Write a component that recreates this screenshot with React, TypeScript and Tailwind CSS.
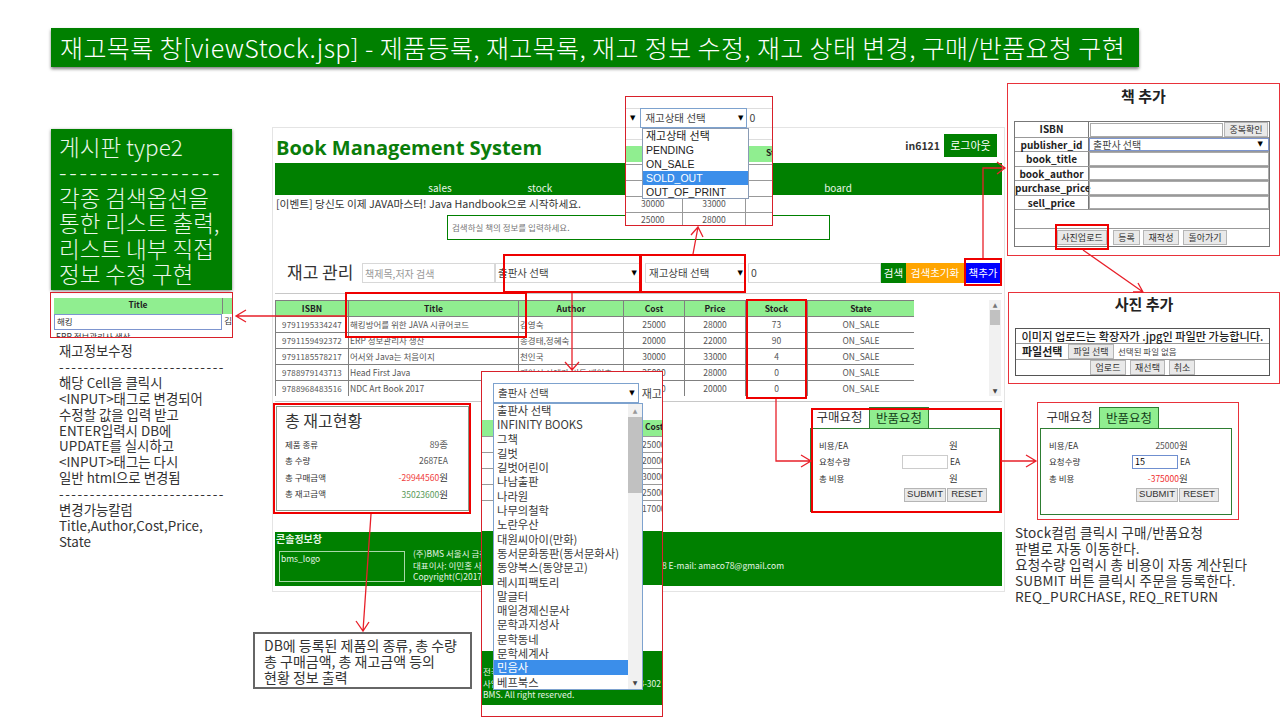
import React from "react";

const rows = [
  ["9791195334247", "해킹방어를 위한 JAVA 시큐어코드", "김영숙", "25000", "28000", "73", "ON_SALE"],
  ["9791159492372", "ERP 정보관리사 생산", "송경태,정혜숙", "20000", "22000", "90", "ON_SALE"],
  ["9791185578217", "어서와 Java는 처음이지", "천인국", "30000", "33000", "4", "ON_SALE"],
  ["9788979143713", "Head First Java", "케이시 시에라,버트 베이츠", "25000", "28000", "0", "ON_SALE"],
  ["9788968483516", "NDC Art Book 2017", "넥슨", "17000", "20000", "0", "ON_SALE"],
];

const publishers = [
  "출판사 선택", "INFINITY BOOKS", "그책", "길벗", "길벗어린이", "나남출판", "나라원", "나무의철학", "노란우산",
  "대원씨아이(만화)", "동서문화동판(동서문화사)", "동양북스(동양문고)", "레시피팩토리", "말글터", "매일경제신문사",
  "문학과지성사", "문학동네", "문학세계사", "민음사", "베프북스",
];

function Caret() {
  return <span className="text-[7px] leading-none text-black font-['DejaVu_Sans',sans-serif]">▼</span>;
}

function Btn({ children, className = "" }: { children: React.ReactNode; className?: string }) {
  return (
    <span className={`flex items-center justify-center bg-[#e9e9e9] border border-[#b5b5b5] text-[#333] ${className}`}>
      {children}
    </span>
  );
}

function StockTable() {
  return (
    <div className="h-[96px] w-[639px] overflow-hidden">
      <table className="table-fixed border-collapse w-[639px] text-[8.5px] text-[#555]">
        <colgroup>
          <col className="w-[73px]" />
          <col className="w-[170px]" />
          <col className="w-[105px]" />
          <col className="w-[61px]" />
          <col className="w-[61px]" />
          <col className="w-[62px]" />
          <col className="w-[107px]" />
        </colgroup>
        <thead>
          <tr className="h-4 bg-[#90ee90] text-[#222]">
            {["ISBN", "Title", "Author", "Cost", "Price", "Stock", "State"].map((h) => (
              <th key={h} className="border border-[#808080] font-bold p-0">{h}</th>
            ))}
          </tr>
        </thead>
        <tbody>
          {rows.map((r) => (
            <tr key={r[0]} className="h-4">
              <td className="border border-[#808080] p-0 text-center text-[8px] tracking-[0.02em]">{r[0]}</td>
              <td className="border border-[#808080] p-0 pl-[1px] whitespace-nowrap overflow-hidden">{r[1]}</td>
              <td className="border border-[#808080] p-0 pl-[1px] whitespace-nowrap overflow-hidden">{r[2]}</td>
              <td className="border border-[#808080] p-0 text-center">{r[3]}</td>
              <td className="border border-[#808080] p-0 text-center">{r[4]}</td>
              <td className="border border-[#808080] p-0 text-center">{r[5]}</td>
              <td className="border border-[#808080] p-0 text-center">{r[6]}</td>
            </tr>
          ))}
        </tbody>
      </table>
    </div>
  );
}

function RequestPanel({ price, qty, total }: { price?: string; qty?: string; total?: string }) {
  return (
    <div className="w-full h-full flex flex-col text-[#333]">
      <div className="flex h-[21px] text-[12.5px] leading-[20px]">
        <span className="w-[59px] text-center">구매요청</span>
        <span className="w-[60px] text-center bg-[#90ee90] border border-[#2e7d32] border-b-0 text-[#14401a]">반품요청</span>
      </div>
      <div className="flex-1 border border-[#2e7d32] px-2 pt-[8px] text-[8.5px]">
        <div className="flex items-center h-[16.5px]">
          <span className="w-[82px]">비용/EA</span>
          <span className="w-[48px] text-right text-[#555]">{price}</span>
          <span className="text-[9.5px]">원</span>
        </div>
        <div className="flex items-center h-[16.5px]">
          <span className="w-[83px]">요청수량</span>
          <span className={`w-[46px] h-[14px] border text-[9px] leading-[12px] pl-[2px] text-black ${qty ? "border-[#6f8fd0]" : "border-[#cccccc]"}`}>{qty}</span>
          <span className="ml-[2px]">EA</span>
        </div>
        <div className="flex items-center h-[16.5px]">
          <span className="w-[82px]">총 비용</span>
          <span className="w-[48px] text-right text-[#f03030]">{total}</span>
          <span className="text-[9.5px]">원</span>
        </div>
        <div className="flex justify-end mt-[1px] pr-[4px] font-['Liberation_Sans',sans-serif] text-[9.5px]">
          <Btn className="w-[42px] h-[14px]">SUBMIT</Btn>
          <Btn className="w-[40px] h-[14px] ml-[1px]">RESET</Btn>
        </div>
      </div>
    </div>
  );
}

function MainWindow() {
  return (
    <div className="absolute left-[272px] top-[127px] w-[733px] h-[465px] border border-[#e4e4e4] bg-white pl-[2px] pr-[2px] flex flex-col">
      <div className="h-[35px] flex items-center justify-between pr-[5px]">
        <span className="text-[20px] pt-[5px] font-bold text-[#0a7d0a] pl-[1px] font-['Open_Sans','Noto_Sans_CJK_KR',sans-serif]">Book Management System</span>
        <div className="flex items-center gap-[4px]">
          <span className="text-[10.5px] font-bold text-[#333]">in6121</span>
          <span className="w-[53px] h-[23px] bg-[#008000] text-white text-[11px] flex items-center justify-center">로그아웃</span>
        </div>
      </div>
      <div className="h-[32px] w-[727px] bg-[#008000] flex items-end text-[10px] leading-[14px] text-[#e8f5e8]">
        <span className="w-[115px]" />
        <span className="w-[100px] text-center">sales</span>
        <span className="w-[100px] text-center">stock</span>
        <span className="w-[198px]" />
        <span className="w-[100px] text-center">board</span>
      </div>
      <div className="text-[10.7px] leading-[15px] pl-[1px] text-[#333] mt-[1px]">[이벤트] 당신도 이제 JAVA마스터! Java Handbook으로 시작하세요.</div>
      <div className="ml-[172px] mt-[4px] w-[383px] h-[25px] border border-[#008000] flex items-center pl-[4px] text-[8.5px] text-[#777]">검색하실 책의 정보를 입력하세요.</div>
      <div className="mt-[23px] h-[20px] flex items-stretch text-[10.5px] text-[#444]">
        <span className="w-[87px] pl-[12px] text-[17px] leading-[18px] text-[#333]">재고 관리</span>
        <span className="w-[133px] border border-[#d8d8d8] pl-[2px] flex items-center text-[#999] text-[10px]">책제목,저자 검색</span>
        <span className="w-[145px] border border-[#d8d8d8] pl-[2px] pr-[2px] flex items-center justify-between"><span>출판사 선택</span><Caret /></span>
        <span className="w-[5px]" />
        <span className="w-[101px] border border-[#d8d8d8] pl-[3px] pr-[2px] flex items-center justify-between"><span>재고상태 선택</span><Caret /></span>
        <span className="w-[2px]" />
        <span className="w-[133px] border border-[#d8d8d8] pl-[2px] flex items-center">0</span>
        <span className="w-[25px] bg-[#008000] text-white flex items-center justify-center">검색</span>
        <span className="w-[58px] bg-[#ffa500] text-white flex items-center justify-center">검색초기화</span>
        <span className="w-[2px]" />
        <span className="w-[34px] bg-[#0000ff] text-white flex items-center justify-center">책추가</span>
      </div>
      <div className="mt-[10px] w-[727px] border-t border-[#c8c8c8]" />
      <div className="mt-[6px] w-[727px] h-[96px] flex justify-between">
        <StockTable />
        <div className="w-[12px] mr-[1px] bg-[#f1f1f1] flex flex-col items-center">
          <span className="text-[6px] leading-[10px] text-[#777] font-['DejaVu_Sans',sans-serif]">▲</span>
          <span className="w-[10px] h-[15px] bg-[#c1c1c1]" />
          <span className="mt-auto text-[6px] leading-[10px] text-[#444] font-['DejaVu_Sans',sans-serif]">▼</span>
        </div>
      </div>
      <div className="mt-[5px] w-[727px] border-t border-[#c8c8c8]" />
      <div className="mt-[4px] w-[727px] h-[108px] flex justify-between">
        <div className="ml-[1px] w-[193px] h-[105px] border border-[#8a9a8a] pl-[8px] pr-[20px] pt-[2px] text-[8.5px] text-[#333]">
          <div className="text-[16px] leading-[22px] mb-[5px]">총 재고현황</div>
          <div className="flex justify-between h-[16.5px] items-center"><span>제품 종류</span><span className="text-[#555]">89<span className="text-[9.5px]">종</span></span></div>
          <div className="flex justify-between h-[16.5px] items-center"><span>총 수량</span><span className="text-[#555]">2687EA</span></div>
          <div className="flex justify-between h-[16.5px] items-center"><span>총 구매금액</span><span className="text-[#f04040]">-29944560<span className="text-[9.5px] text-[#333]">원</span></span></div>
          <div className="flex justify-between h-[16.5px] items-center"><span>총 재고금액</span><span className="text-[#5a9a5a]">35023600<span className="text-[9.5px] text-[#333]">원</span></span></div>
        </div>
        <div className="w-[190px] h-[105px] mr-[2px] mt-[1px]">
          <RequestPanel />
        </div>
      </div>
      <div className="mt-[18px] w-[727px] h-[54px] bg-[#008000] text-[#e6f5e6] pl-[1px]">
        <div className="text-[10px] leading-[14px] font-bold">콘솔정보창</div>
        <div className="flex ml-[3px] mt-[5px]">
          <div className="w-[126px] h-[31px] border border-[#a8d8a8] text-[8.5px] pl-[1px]">bms_logo</div>
          <div className="ml-[8px] -mt-[3px] w-[371px] text-[8.5px] leading-[11.5px]">
            <div>(주)BMS 서울시 금천구 가산디지털2로</div>
            <div className="flex justify-between"><span>대표이사: 이민홍 사업자등록번호</span><span>38 E-mail: amaco78@gmail.com</span></div>
            <div>Copyright(C)2017</div>
          </div>
        </div>
      </div>
    </div>
  );
}

function StateDropdown() {
  return (
    <div className="absolute left-[625px] top-[96px] w-[148px] h-[130px] border border-[#d8202a] bg-white overflow-hidden text-[8.5px] text-[#555]">
      <div className="mt-[11px] h-[20px] flex items-center border-t border-b border-[#dddddd] pl-[4px]">
        <Caret />
        <span className="ml-[5px] w-[107px] h-[20px] border border-[#7da2ce] flex items-center justify-between pl-[4px] pr-[3px] text-[10.5px] text-[#444]">
          <span>재고상태 선택</span><Caret />
        </span>
        <span className="ml-[2px] text-[10.5px] text-[#444]">0</span>
      </div>
      <div className="mt-[11px] h-[1px] bg-[#dddddd]" />
      <div className="mt-[6px] h-[16px] bg-[#90ee90] pl-[140px] font-bold text-[#222] whitespace-nowrap overflow-hidden">Stock</div>
      <div className="mt-[2px]">
        {["", "", "30000|33000", "25000|28000"].map((v, i) => (
          <div key={i} className="grid grid-cols-[57px_63px_28px] h-[16px] border-t border-[#999999] items-center">
            <span className="pl-[15px] border-r border-[#999999] h-full">{v.split("|")[0]}</span>
            <span className="text-center border-r border-[#999999] h-full">{v.split("|")[1]}</span>
            <span />
          </div>
        ))}
      </div>
      <div className="absolute left-[16px] top-[31px] w-[107px] h-[71px] bg-white border border-[#8a9bb5] text-[10.5px] leading-[14px] text-[#222] font-['Liberation_Sans','Noto_Sans_CJK_KR',sans-serif]">
        <div className="pl-[3px] text-[11px]">재고상태 선택</div>
        <div className="pl-[3px]">PENDING</div>
        <div className="pl-[3px]">ON_SALE</div>
        <div className="pl-[3px] bg-[#3b8eea] text-white">SOLD_OUT</div>
        <div className="pl-[3px]">OUT_OF_PRINT</div>
      </div>
    </div>
  );
}

function PublisherDropdown() {
  return (
    <div className="absolute left-[481px] top-[371px] w-[182px] h-[346px] border border-[#d8202a] bg-white overflow-hidden text-[8.5px] text-[#555]">
      <div className="mt-[11px] h-[20px] flex items-center pl-[11px]">
        <span className="w-[150px] h-[20px] border border-[#7da2ce] flex items-center justify-between pl-[4px] pr-[3px] text-[10.5px] text-[#444]">
          <span>출판사 선택</span><Caret />
        </span>
        <span className="ml-[3px] text-[11px] text-[#444] whitespace-nowrap">재고</span>
      </div>
      <div className="mt-[17px] h-[16px] bg-[#90ee90] pl-[163px] font-bold text-[#222]">Cost</div>
      {["25000", "20000", "30000", "25000", "17000"].map((v, i) => (
        <div key={i} className="h-[16px] border-t border-[#999999] pl-[160px] leading-[15px] whitespace-nowrap">{v}</div>
      ))}
      <div className="mt-[15px] h-[54px] bg-[#008000]" />
      <div className="mt-[66px] h-[54px] bg-[#008000] text-[#e6f5e6] leading-[11.5px] pt-[15px] pl-[1px]">
        <div>전국</div>
        <div className="flex justify-between"><span>사업</span><span className="pr-[1px]">33-302</span></div>
        <div>BMS. All right reserved.</div>
      </div>
      <div className="absolute left-[11px] top-[31px] w-[150px] h-[287px] bg-white border border-[#7da2ce] flex text-[11.3px] leading-[14.3px] text-[#3a3a3a]">
        <div className="w-[135px] -mt-[1px]">
          {publishers.map((p) => (
            <div key={p} className={`pl-[3px] whitespace-nowrap ${p === "민음사" ? "bg-[#3b8eea] text-white" : ""}`}>{p}</div>
          ))}
        </div>
        <div className="w-[14px] bg-[#f1f1f1] flex flex-col items-center">
          <span className="text-[6px] leading-[13px] text-[#999] font-['DejaVu_Sans',sans-serif]">▲</span>
          <span className="w-[14px] h-[76px] bg-[#c1c1c1]" />
          <span className="mt-auto text-[6px] leading-[13px] text-[#444] font-['DejaVu_Sans',sans-serif]">▼</span>
        </div>
      </div>
    </div>
  );
}

function BookForm() {
  const fields = ["book_title", "book_author", "purchase_price", "sell_price"];
  return (
    <div className="absolute left-[1007px] top-[83px] w-[273px] h-[173px] border border-[#e8323a] bg-white flex flex-col items-center text-[#222]">
      <div className="mt-[1px] text-[15px] leading-[22px] font-bold">책 추가</div>
      <div className="mt-[14px] -ml-[3px] w-[256px] border border-[#777777] text-[10px] leading-[14px]">
        <div className="flex h-[16px] border-b border-[#999999]">
          <span className="w-[74px] border-r border-[#777777] text-center font-bold">ISBN</span>
          <span className="flex-1 mx-[1px] mt-[1px] border border-[#aaaaaa]" />
          <Btn className="w-[44px] h-[15px] mr-[1px] text-[9px]">중복확인</Btn>
        </div>
        <div className="flex h-[14px] border-b border-[#999999]">
          <span className="w-[74px] border-r border-[#777777] text-center font-bold">publisher_id</span>
          <span className="flex-1 border border-[#7d95cf] flex items-center justify-between pl-[3px] pr-[5px] text-[#444]"><span>출판사 선택</span><Caret /></span>
        </div>
        {fields.map((f) => (
          <div key={f} className="flex h-[14.5px] border-b border-[#999999]">
            <span className="w-[74px] border-r border-[#777777] text-center font-bold whitespace-nowrap">{f}</span>
            <span className="flex-1 border border-[#aaaaaa]" />
          </div>
        ))}
        <div className="h-[19px] border-b border-[#999999]" />
        <div className="h-[17px] flex pt-[1px] pl-[42px] text-[9px] text-[#444]">
          <Btn className="w-[50px] h-[15px]">사진업로드</Btn>
          <Btn className="w-[27px] h-[15px] ml-[6px]">등록</Btn>
          <Btn className="w-[36px] h-[15px] ml-[3px]">재작성</Btn>
          <Btn className="w-[44px] h-[15px] ml-[4px]">돌아가기</Btn>
        </div>
      </div>
    </div>
  );
}

function PhotoForm() {
  return (
    <div className="absolute left-[1008px] top-[292px] w-[272px] h-[92px] border border-[#e8323a] bg-white flex flex-col items-center text-[#222]">
      <div className="text-[15px] leading-[22px] font-bold">사진 추가</div>
      <div className="mt-[13px] -ml-[3px] w-[255px] border border-[#555555] text-[11.2px] leading-[15px]">
        <div className="h-[15px] border-b border-[#999999] text-center font-medium whitespace-nowrap">이미지 업로드는 확장자가 .jpg인 파일만 가능합니다.</div>
        <div className="h-[16px] border-b border-[#999999] flex items-center pl-[6px]">
          <span className="font-bold w-[46px] text-[11px]">파일선택</span>
          <Btn className="w-[46px] h-[15px] text-[9px]">파일 선택</Btn>
          <span className="ml-[4px] text-[8.5px] text-[#444]">선택된 파일 없음</span>
        </div>
        <div className="h-[15px] flex justify-center gap-[4px] text-[9px] text-[#444]">
          <Btn className="w-[36px] h-[15px]">업로드</Btn>
          <Btn className="w-[35px] h-[15px]">재선택</Btn>
          <Btn className="w-[26px] h-[15px]">취소</Btn>
        </div>
      </div>
    </div>
  );
}

function Arrows() {
  return (
    <svg className="absolute left-0 top-0 w-[1280px] h-[720px] pointer-events-none" viewBox="0 0 1280 720" fill="none" stroke="#e8202a" strokeWidth={1.3}>
      <path d="M345 316H236M246 310L236 316L246 322" />
      <path d="M572 293V370M565 362L572 370L579 362" />
      <path d="M693 254L698 227M691 235L698 227L703 237" />
      <path d="M983 258V168H1005M997 162L1005 168L997 174" />
      <path d="M1083 250L1143 292M1133 292H1143L1138 283" />
      <path d="M776 399V461H811M801 455L811 461L801 467" />
      <path d="M1001 461H1036M1026 455L1036 461L1026 467" />
      <path d="M371 514L363 631M356 621L363 631L369 622" />
    </svg>
  );
}

function RedBox({ className }: { className: string }) {
  return <div className={`absolute border-2 border-[#ee0000] pointer-events-none ${className}`} />;
}

export default function App() {
  return (
    <div className="relative w-[1280px] h-[720px] overflow-hidden bg-white text-[#222] font-['Noto_Sans_CJK_KR','Liberation_Sans',sans-serif]">
      <div className="absolute left-[51px] top-[28px] w-[1088px] h-[39px] bg-[#008000] shadow-[0_2px_3px_rgba(0,0,0,0.5)] text-white text-[25px] tracking-[0.4px] leading-[39px] pl-[9px] font-light whitespace-nowrap">
        재고목록 창[viewStock.jsp] - 제품등록, 재고목록, 재고 정보 수정, 재고 상태 변경, 구매/반품요청 구현
      </div>

      <div className="absolute left-[51px] top-[129px] w-[181px] h-[161px] bg-[#008000] shadow-[0_1px_3px_rgba(0,0,0,0.5)] text-[#eaf7ea] text-[22.5px] leading-[25.4px] pl-[8px] pt-[5px] font-light whitespace-nowrap overflow-hidden">
        <div>게시판 type2</div>
        <div className="tracking-[2.7px]">----------------</div>
        <div>각종 검색옵션을</div>
        <div>통한 리스트 출력,</div>
        <div>리스트 내부 직접</div>
        <div>정보 수정 구현</div>
      </div>

      <div className="absolute left-[50px] top-[292px] w-[183px] h-[46px] border border-[#d8202a] overflow-hidden pl-[3px] pt-[5px] text-[8.5px]">
        <div className="flex h-[16px] bg-[#90ee90] font-bold text-[#222]">
          <span className="w-[169px] text-center border-r border-[#808080]">Title</span>
        </div>
        <div className="flex h-[16px]">
          <span className="w-[169px] border border-[#7d95cf] pl-[2px] text-[#333]">해킹</span>
          <span className="pl-[2px] text-[#333]">김</span>
        </div>
        <div className="text-[#333] pl-[2px] whitespace-nowrap">ERP 정보관리사 생산</div>
      </div>

      <div className="absolute left-[59px] top-[343px] w-[200px] text-[13.4px] leading-[15.9px] text-[#333] whitespace-nowrap">
        <div>재고정보수정</div>
        <div className="tracking-[1.5px]">---------------------------</div>
        <div>해당 Cell을 클릭시</div>
        <div>&lt;INPUT&gt;태그로 변경되어</div>
        <div>수정할 값을 입력 받고</div>
        <div>ENTER입력시 DB에</div>
        <div>UPDATE를 실시하고</div>
        <div>&lt;INPUT&gt;태그는 다시</div>
        <div>일반 html으로 변경됨</div>
        <div className="tracking-[1.5px]">---------------------------</div>
        <div>변경가능칼럼</div>
        <div>Title,Author,Cost,Price,</div>
        <div>State</div>
      </div>

      <MainWindow />
      <StateDropdown />
      <PublisherDropdown />
      <BookForm />
      <PhotoForm />

      <div className="absolute left-[1037px] top-[402px] w-[202px] h-[118px] border border-[#e8323a] bg-white pl-[2px] py-[4px] pr-[6px]">
        <RequestPanel price="25000" qty="15" total="-375000" />
      </div>

      <div className="absolute left-[1015px] top-[524px] w-[260px] text-[13.6px] tracking-[0.2px] leading-[16px] text-[#333] whitespace-nowrap">
        <div>Stock컬럼 클릭시 구매/반품요청</div>
        <div>판별로 자동 이동한다.</div>
        <div>요청수량 입력시 총 비용이 자동 계산된다</div>
        <div>SUBMIT 버튼 클릭시 주문을 등록한다.</div>
        <div>REQ_PURCHASE, REQ_RETURN</div>
      </div>

      <div className="absolute left-[253px] top-[632px] w-[219px] h-[57px] border-2 border-[#666666] bg-white pl-[9px] pt-[3px] text-[14px] leading-[16px] text-[#333] whitespace-nowrap">
        <div>DB에 등록된 제품의 종류, 총 수량</div>
        <div>총 구매금액, 총 재고금액 등의</div>
        <div>현황 정보 출력</div>
      </div>

      <RedBox className="left-[345px] top-[292px] w-[182px] h-[46px]" />
      <RedBox className="left-[503px] top-[254px] w-[138px] h-[39px]" />
      <RedBox className="left-[640px] top-[254px] w-[106px] h-[39px]" />
      <RedBox className="left-[964px] top-[258px] w-[38px] h-[28px]" />
      <RedBox className="left-[746px] top-[299px] w-[61px] h-[100px]" />
      <RedBox className="left-[273px] top-[403px] w-[198px] h-[111px]" />
      <RedBox className="left-[811px] top-[408px] w-[191px] h-[105px]" />
      <RedBox className="left-[1055px] top-[224px] w-[54px] h-[26px]" />
      <Arrows />
    </div>
  );
}
